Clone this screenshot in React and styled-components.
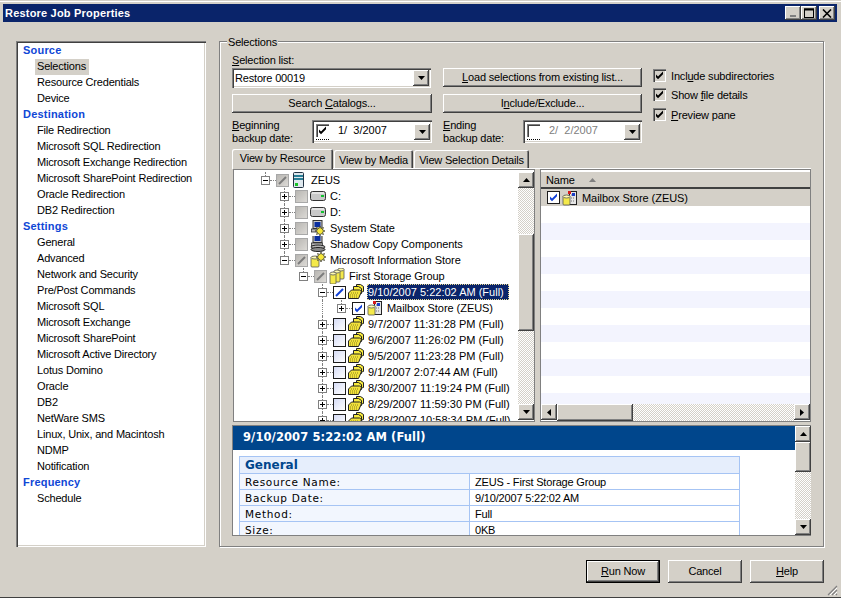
import React from "react";
import styled, { createGlobalStyle } from "styled-components";

const FACE = "#d4d0c8";
const UI_FONT = `"Liberation Sans", Arial, sans-serif`;
const WIDE_FONT = `"DejaVu Sans", Verdana, sans-serif`;

const GlobalStyle = createGlobalStyle`
  html, body {
    margin: 0;
    background: #fff;
  }
  body {
    font-family: ${UI_FONT};
    font-size: 11px;
    letter-spacing: -0.18px;
    color: #000;
  }
  * {
    box-sizing: border-box;
  }
`;

const Window = styled.div`
  position: relative;
  width: 841px;
  height: 598px;
  padding: 4px 4px 0 3px;
  background: ${FACE};
  border-bottom: 1px solid #404040;
  box-shadow: inset 0 1px 0 ${FACE}, inset 0 2px 0 #fff;
`;

const TitleBar = styled.div`
  display: flex;
  align-items: center;
  justify-content: space-between;
  height: 18px;
  padding: 0 2px;
  background: #0a246a;
  color: #fff;
  font-weight: bold;
  font-size: 11px;
  letter-spacing: 0.2px;
`;

const TitleButtons = styled.div`
  display: flex;
`;

const TitleButton = styled.div`
  width: 16px;
  height: 14px;
  margin-left: ${(p) => (p.$gap ? "2px" : "0")};
  display: flex;
  align-items: center;
  justify-content: center;
  background: ${FACE};
  box-shadow: inset -1px -1px #404040, inset 1px 1px #fff, inset -2px -2px #808080;
`;

const Body = styled.div`
  display: flex;
  gap: 13px;
  height: 506px;
  margin-top: 19px;
  padding-left: 13px;
`;

const Nav = styled.div`
  width: 190px;
  padding: 2px;
  background: #fff;
  box-shadow: inset 1px 1px #808080, inset 2px 2px #404040, inset -1px -1px #fff, inset -2px -2px ${FACE};
`;

const NavHead = styled.div`
  height: 16px;
  line-height: 15px;
  padding-left: 5px;
  color: #0f47d6;
  font-weight: bold;
  letter-spacing: 0.2px;
`;

const NavItem = styled.div`
  width: fit-content;
  height: 16px;
  line-height: 15px;
  margin-left: 17px;
  padding: 0 3px 0 2px;
  background: ${(p) => (p.$active ? FACE : "transparent")};
`;

const Group = styled.div`
  position: relative;
  width: 605px;
  padding: 13px 12px 0 12px;
  border: 1px solid #808080;
  box-shadow: 1px 1px 0 #fff, inset 1px 1px 0 #fff;
`;

const Legend = styled.div`
  position: absolute;
  top: -6px;
  left: 7px;
  padding: 0 1px;
  line-height: 13px;
  background: ${FACE};
`;

const Controls = styled.div`
  display: grid;
  grid-template-columns: 200px 199px auto;
  grid-template-rows: 33px 20px 23px;
  column-gap: 11px;
  row-gap: 6px;
`;

const ListField = styled.div`
  display: flex;
  flex-direction: column;
  gap: 1px;
  margin-top: -1px;
  line-height: 13px;
`;

const Combo = styled.div`
  display: flex;
  align-items: center;
  justify-content: space-between;
  height: 21px;
  width: 199px;
  padding: 2px 2px 2px 3px;
  background: #fff;
  box-shadow: inset 1px 1px #808080, inset 2px 2px #404040, inset -1px -1px #fff, inset -2px -2px ${FACE};
`;

const Button = styled.div`
  display: flex;
  align-items: center;
  justify-content: center;
  height: ${(p) => p.$h || 19}px;
  width: ${(p) => (p.$w ? `${p.$w}px` : "100%")};
  margin-top: ${(p) => p.$top || 0}px;
  padding-bottom: 1px;
  background: ${FACE};
  box-shadow: inset -1px -1px #404040, inset 1px 1px #fff, inset -2px -2px #808080;
`;

const DefaultButton = styled(Button)`
  border: 1px solid #000;
`;

const DateField = styled.div`
  display: flex;
  justify-content: space-between;
  line-height: 13px;
`;

const DateLabel = styled.span`
  margin-top: -1px;
`;

const DateBox = styled.div`
  display: flex;
  align-items: center;
  width: ${(p) => p.$w}px;
  height: 23px;
  padding: 2px 2px 2px 4px;
  color: ${(p) => (p.$off ? "#808080" : "#000")};
  background: #fff;
  box-shadow: inset 1px 1px #808080, inset 2px 2px #404040, inset -1px -1px #fff, inset -2px -2px ${FACE};
`;

const DateCheck = styled.span`
  width: 13px;
  height: 16px;
  flex: none;
  border-bottom: 1px dotted #000;
`;

const DateValue = styled.span`
  flex: 1;
  margin: 0 0 2px 9px;
  white-space: pre;
  letter-spacing: 0;
`;

const Options = styled.div`
  grid-column: 3;
  grid-row: 1 / span 3;
  display: flex;
  flex-direction: column;
  padding-top: 14px;
`;

const Option = styled.div`
  display: flex;
  align-items: center;
  height: 13px;
  margin-bottom: ${(p) => p.$after}px;
  gap: 5px;
`;

const ClassicBox = styled.span`
  display: block;
  width: 13px;
  height: 13px;
  flex: none;
  box-shadow: inset 1px 1px #808080, inset 2px 2px #404040, inset -1px -1px #fff;
  background: ${(p) => (p.$shade ? FACE : "#fff")};
`;

const Tabs = styled.div`
  display: flex;
  align-items: flex-end;
  height: 20px;
  margin-top: 6px;
  border-bottom: 1px solid #fff;
`;

const Tab = styled.div`
  height: ${(p) => (p.$active ? 20 : 18)}px;
  width: ${(p) => p.$w}px;
  margin-right: 1px;
  margin-bottom: ${(p) => (p.$active ? -1 : 0)}px;
  line-height: ${(p) => (p.$active ? 18 : 20)}px;
  background: ${FACE};
  border-radius: 2px 2px 0 0;
  box-shadow: inset 1px 1px #fff, inset -1px 0 #404040, inset -2px 0 #808080;
  text-align: center;
`;

const Split = styled.div`
  display: flex;
  gap: 5px;
  height: 253px;
  padding-left: 1px;
`;

const TreePanel = styled.div`
  display: flex;
  width: 302px;
  background: #fff;
  border: 1px solid #808080;
`;

const TreeRows = styled.div`
  flex: 1;
  padding-top: 2px;
  overflow: hidden;
`;

const TreeRow = styled.div`
  position: relative;
  display: flex;
  align-items: center;
  height: 16px;
  padding-left: ${(p) => 27 + p.$level * 19}px;
  white-space: nowrap;

  &::before {
    content: "";
    display: ${(p) => (p.$through ? "block" : "none")};
    position: absolute;
    left: ${(p) => 31 + (p.$level - 1) * 19}px;
    top: 0;
    bottom: 0;
    border-left: 1px dotted #808080;
  }
`;

const Expander = styled.span`
  position: relative;
  width: 15px;
  height: 16px;
  flex: none;

  &::before {
    content: "";
    position: absolute;
    left: 4px;
    top: 0;
    bottom: ${(p) => (p.$last ? "8px" : "0")};
    border-left: 1px dotted #808080;
  }

  &::after {
    content: "";
    position: absolute;
    left: 9px;
    right: 0;
    top: 8px;
    border-top: 1px dotted #808080;
  }
`;

const ExpanderBox = styled.svg`
  position: absolute;
  z-index: 1;
  left: 0;
  top: 4px;
  display: block;
`;

const TriBox = styled.span`
  display: block;
  width: 13px;
  height: 13px;
  flex: none;
  border: 1px solid ${(p) => (p.$gray ? "#a8a8a8" : "#1c1c1c")};
  background: ${(p) =>
    p.$gray ? "linear-gradient(135deg, #b8b6b2, #dcdad6)" : p.$tint ? "linear-gradient(135deg, #d6dcf6, #fff)" : "#fff"};
`;

const IconSlot = styled.span`
  display: flex;
  justify-content: center;
  width: 16px;
  height: 16px;
  margin-left: 2px;
  flex: none;
`;

const NodeLabel = styled.span`
  height: 16px;
  line-height: 17px;
  margin-left: ${(p) => (p.$selected ? 3 : 4)}px;
  padding: 0 ${(p) => (p.$selected ? "5px" : "0")} 0 ${(p) => (p.$selected ? "1px" : "0")};
  letter-spacing: ${(p) => (p.$dated ? "0" : "-0.05px")};
  color: ${(p) => (p.$selected ? "#fff" : "#000")};
  background: ${(p) => (p.$selected ? "#0a246a" : "transparent")};
  outline: ${(p) => (p.$selected ? "1px dotted #e8d890" : "none")};
  outline-offset: -1px;
`;

const VScroll = styled.div`
  display: flex;
  flex-direction: column;
  width: 16px;
  flex: none;
  padding: ${(p) => p.$pad || 0}px 0 ${(p) => (p.$pad ? 1 : 0)}px;
`;

const HScroll = styled.div`
  display: flex;
  height: 17px;
  flex: none;
  margin-top: auto;
`;

const ScrollButton = styled.div`
  display: flex;
  align-items: center;
  justify-content: center;
  width: 16px;
  height: 16px;
  flex: none;
  background: ${FACE};
  box-shadow: inset -1px -1px #404040, inset 1px 1px #fff, inset -2px -2px #808080;
`;

const Track = styled.div`
  flex: ${(p) => (p.$fixed ? "none" : 1)};
  height: ${(p) => (p.$fixed ? `${p.$fixed}px` : "auto")};
  background: repeating-conic-gradient(#fff 0 25%, ${FACE} 0 50%) 0 0 / 2px 2px;
`;

const Thumb = styled.div`
  flex: none;
  width: ${(p) => (p.$w ? `${p.$w}px` : "100%")};
  height: ${(p) => (p.$h ? `${p.$h}px` : "100%")};
  background: ${FACE};
  box-shadow: inset -1px -1px #404040, inset 1px 1px #fff, inset -2px -2px #808080;
`;

const ListPanel = styled.div`
  display: flex;
  flex-direction: column;
  width: 271px;
  background: #fff;
  border: 1px solid #808080;
  padding-top: 2px;
`;

const ListHead = styled.div`
  display: flex;
  align-items: center;
  gap: 14px;
  height: 17px;
  flex: none;
  padding-left: 5px;
  background: ${FACE};
  border-bottom: 2px solid #404040;
`;

const ListRows = styled.div`
  flex: 1;
  overflow: hidden;
`;

const ListRow = styled.div`
  display: flex;
  align-items: center;
  height: 17px;
  padding-left: 6px;
  background: ${(p) => (p.$active ? FACE : p.$stripe ? "#f3f4fe" : "#fff")};
`;

const Preview = styled.div`
  display: flex;
  height: 111px;
  margin-top: 3px;
  background: #fff;
  border: 1px solid #808080;
  border-right: 0;
  overflow: hidden;
`;

const PreviewPage = styled.div`
  flex: 1;
  overflow: hidden;
`;

const PreviewBanner = styled.div`
  height: 24px;
  line-height: 23px;
  padding-left: 10px;
  background: #00468c;
  color: #fff;
  font-family: ${WIDE_FONT};
  font-size: 11.5px;
  font-weight: bold;
  letter-spacing: 0.1px;
`;

const InfoTable = styled.table`
  width: 501px;
  margin: 6px 0 0 6px;
  border-collapse: collapse;
  table-layout: fixed;
  font-size: 11px;

  td, th {
    height: 16px;
    padding: 0 0 0 5px;
    border: 1px solid #a6c4f4;
    line-height: 14px;
    text-align: left;
    white-space: nowrap;
  }
`;

const KeyColumn = styled.col`
  width: 230px;
`;

const InfoTitle = styled.th`
  background: #e6eefc;
  color: #00468c;
  font-family: ${WIDE_FONT};
  font-size: 12px;
  font-weight: bold;
  letter-spacing: 0;
  && {
    height: 17px;
  }
`;

const InfoKey = styled.td`
  background: #f2f6fe;
  font-family: ${WIDE_FONT};
  font-size: 10.5px;
  letter-spacing: 0.7px;
`;

const InfoValue = styled.td`
  background: #fff;
`;

const Footer = styled.div`
  display: flex;
  justify-content: flex-end;
  gap: 8px;
  margin-top: 13px;
  padding-right: 13px;
`;

const Grip = styled.svg`
  position: absolute;
  right: 3px;
  bottom: 1px;
`;

const Arrow = ({ dir = "down", color = "#000" }) => {
  const points = {
    down: "0,0 7,0 3.5,4",
    up: "0,4 7,4 3.5,0",
    left: "4,0 4,7 0,3.5",
    right: "0,0 0,7 4,3.5",
  }[dir];
  const wide = dir === "up" || dir === "down";
  return (
    <svg width={wide ? 7 : 4} height={wide ? 4 : 7} viewBox={wide ? "0 0 7 4" : "0 0 4 7"}>
      <polygon points={points} fill={color} />
    </svg>
  );
};

const Tick = ({ color = "#000" }) => (
  <svg width="13" height="13" viewBox="0 0 13 13" style={{ display: "block" }}>
    <path d="M3 5.5l2 2 5-5v2.8l-5 5-2-2z" fill={color} />
  </svg>
);

const CheckBox = ({ kind }) => {
  if (kind === "gray" || kind === "graySlash") {
    return (
      <TriBox $gray>
        {kind === "graySlash" && (
          <svg width="11" height="11" viewBox="0 0 11 11" style={{ display: "block" }}>
            <path d="M2 9L9 2" stroke="#7c7c7c" strokeWidth="2" />
          </svg>
        )}
      </TriBox>
    );
  }
  if (kind === "slash") {
    return (
      <TriBox>
        <svg width="11" height="11" viewBox="0 0 11 11" style={{ display: "block" }}>
          <path d="M2 9L9 2" stroke="#0f3fd8" strokeWidth="2" />
        </svg>
      </TriBox>
    );
  }
  if (kind === "check") {
    return (
      <TriBox>
        <svg width="11" height="11" viewBox="0 0 11 11" style={{ display: "block" }}>
          <path d="M2 4.5l2 2 5-5v2.8l-5 5-2-2z" fill="#0f3fd8" />
        </svg>
      </TriBox>
    );
  }
  return <TriBox $tint />;
};

const Toggle = ({ open, last }) => (
  <Expander $last={last}>
    <ExpanderBox width="9" height="9" viewBox="0 0 9 9">
      <rect x="0.5" y="0.5" width="8" height="8" fill="#fff" stroke="#808080" />
      <path d={open ? "M2 4.5h5" : "M2 4.5h5M4.5 2v5"} stroke="#000" />
    </ExpanderBox>
  </Expander>
);

const Cylinder = ({ x, y, w = 7, h = 10 }) => (
  <g>
    <rect x={x} y={y + 1} width={w} height={h} rx="1" fill="#f4e94a" stroke="#555" strokeWidth="0.8" />
    <ellipse cx={x + w / 2} cy={y + 1.5} rx={w / 2} ry="1.5" fill="#fffbb0" stroke="#555" strokeWidth="0.8" />
  </g>
);

const Spark = ({ x, y }) => (
  <path
    d={`M${x + 4} ${y}l1 2.5 2.5-1-1 2.5 2.5 1-2.5 1 1 2.5-2.5-1-1 2.5-1-2.5-2.5 1 1-2.5-2.5-1 2.5-1-1-2.5 2.5 1z`}
    fill="#f7e838"
    stroke="#333"
    strokeWidth="0.7"
  />
);

const Monitor = ({ y = 0 }) => (
  <g>
    <rect x="3" y={y + 0.5} width="9" height="8" fill="#c8c8c8" stroke="#333" />
    <rect x="4.5" y={y + 2} width="6" height="5" fill="#0a2ea0" />
    <rect x="1.5" y={y + 9} width="11" height="3" fill="#bbb" stroke="#333" strokeWidth="0.8" />
  </g>
);

const ICONS = {
  server: (
    <>
      <rect x="2.5" y="0.5" width="10" height="15" rx="1" fill="#dfe8ee" stroke="#234" />
      <path d="M3 4h9M3 7h9" stroke="#2a7f96" strokeWidth="2" />
      <rect x="4" y="11" width="3" height="3" fill="#19c22a" />
    </>
  ),
  disk: (
    <>
      <rect x="0.5" y="3.5" width="15" height="9" rx="2" fill="#c9c9c9" stroke="#333" />
      <path d="M2 5h12" stroke="#fff" />
      <rect x="11" y="7" width="3" height="2" fill="#12c030" />
    </>
  ),
  system: (
    <>
      <Monitor />
      <Spark x={6} y={6} />
    </>
  ),
  shadow: (
    <>
      <Monitor y={-2} />
      <ellipse cx="8" cy="11" rx="7" ry="2" fill="#b5b5b5" stroke="#222" />
      <ellipse cx="8" cy="13.5" rx="7" ry="2" fill="#8a8a8a" stroke="#222" />
    </>
  ),
  store: (
    <>
      <Cylinder x={1} y={4} w={8} h={10} />
      <Spark x={7} y={0} />
    </>
  ),
  group: (
    <>
      <Cylinder x={9} y={0} w={6} h={10} />
      <Cylinder x={5} y={2} w={6} h={11} />
      <Cylinder x={1} y={4} w={6} h={11} />
    </>
  ),
  folders: (
    <>
      <path d="M8.5 0.5h4l3 2v5l-7 2z" fill="#f7ea3c" stroke="#222" />
      <path d="M5.5 2.5h5l3 2v5l-8 2z" fill="#f7ea3c" stroke="#222" />
      <path d="M0.5 9l3-3h8l2 1.5-3 7h-10z" fill="#f2e23a" stroke="#222" />
      <path d="M3 9h7M2 11h7M2 13h7" stroke="#8a8020" strokeDasharray="1 1" />
    </>
  ),
  mailbox: (
    <>
      <rect x="7.5" y="1.5" width="7" height="13" fill="#e6e6e6" stroke="#222" />
      <path d="M9 5h4M9 8h4M9 11h4" stroke="#777" strokeDasharray="1 1" />
      <rect x="6" y="1" width="3" height="3" fill="#d81818" />
      <rect x="10" y="3" width="3" height="3" fill="#1c3cc8" />
      <Cylinder x={1} y={5} w={7} h={9} />
    </>
  ),
};

const NodeIcon = ({ name }) => (
  <IconSlot>
    <svg width="16" height="16" viewBox="0 0 16 16">
      {ICONS[name]}
    </svg>
  </IconSlot>
);

const NAV = [
  ["Source", ["Selections", "Resource Credentials", "Device"]],
  [
    "Destination",
    [
      "File Redirection",
      "Microsoft SQL Redirection",
      "Microsoft Exchange Redirection",
      "Microsoft SharePoint Redirection",
      "Oracle Redirection",
      "DB2 Redirection",
    ],
  ],
  [
    "Settings",
    [
      "General",
      "Advanced",
      "Network and Security",
      "Pre/Post Commands",
      "Microsoft SQL",
      "Microsoft Exchange",
      "Microsoft SharePoint",
      "Microsoft Active Directory",
      "Lotus Domino",
      "Oracle",
      "DB2",
      "NetWare SMS",
      "Linux, Unix, and Macintosh",
      "NDMP",
      "Notification",
    ],
  ],
  ["Frequency", ["Schedule"]],
];

const TREE = [
  { level: 0, open: true, last: true, check: "graySlash", icon: "server", label: "ZEUS" },
  { level: 1, check: "gray", icon: "disk", label: "C:" },
  { level: 1, check: "gray", icon: "disk", label: "D:" },
  { level: 1, check: "gray", icon: "system", label: "System State" },
  { level: 1, check: "gray", icon: "shadow", label: "Shadow Copy Components" },
  { level: 1, open: true, last: true, check: "graySlash", icon: "store", label: "Microsoft Information Store" },
  { level: 2, open: true, last: true, check: "graySlash", icon: "group", label: "First Storage Group" },
  { level: 3, open: true, check: "slash", icon: "folders", label: "9/10/2007 5:22:02 AM (Full)", selected: true },
  { level: 4, last: true, through: true, check: "check", icon: "mailbox", label: "Mailbox Store (ZEUS)" },
  { level: 3, icon: "folders", label: "9/7/2007 11:31:28 PM (Full)" },
  { level: 3, icon: "folders", label: "9/6/2007 11:26:02 PM (Full)" },
  { level: 3, icon: "folders", label: "9/5/2007 11:23:28 PM (Full)" },
  { level: 3, icon: "folders", label: "9/1/2007 2:07:44 AM (Full)" },
  { level: 3, icon: "folders", label: "8/30/2007 11:19:24 PM (Full)" },
  { level: 3, icon: "folders", label: "8/29/2007 11:59:30 PM (Full)" },
  { level: 3, icon: "folders", label: "8/28/2007 10:58:34 PM (Full)" },
];

const INFO = [
  ["Resource Name:", "ZEUS - First Storage Group"],
  ["Backup Date:", "9/10/2007 5:22:02 AM"],
  ["Method:", "Full"],
  ["Size:", "0KB"],
];

export default function App() {
  return (
    <Window>
      <GlobalStyle />
      <TitleBar>
        <span>Restore Job Properties</span>
        <TitleButtons>
          <TitleButton>
            <svg width="8" height="8" viewBox="0 0 8 8">
              <path d="M1 7h6" stroke="#808080" strokeWidth="2" />
            </svg>
          </TitleButton>
          <TitleButton>
            <svg width="10" height="10" viewBox="0 0 10 10">
              <rect x="0.5" y="1" width="9" height="8.5" fill="none" stroke="#000" />
              <path d="M0 1.5h10" stroke="#000" strokeWidth="2" />
            </svg>
          </TitleButton>
          <TitleButton $gap>
            <svg width="10" height="9" viewBox="0 0 10 9">
              <path d="M1 0.5l8 8M9 0.5l-8 8" stroke="#000" strokeWidth="1.6" />
            </svg>
          </TitleButton>
        </TitleButtons>
      </TitleBar>

      <Body>
        <Nav>
          {NAV.map(([head, items]) => (
            <React.Fragment key={head}>
              <NavHead>{head}</NavHead>
              {items.map((item) => (
                <NavItem key={item} $active={item === "Selections"}>
                  {item}
                </NavItem>
              ))}
            </React.Fragment>
          ))}
        </Nav>

        <Group>
          <Legend>Selections</Legend>
          <Controls>
            <ListField>
              <span>
                <u>S</u>election list:
              </span>
              <Combo>
                Restore 00019
                <ScrollButton>
                  <Arrow />
                </ScrollButton>
              </Combo>
            </ListField>
            <Button $top={13}>
              <span>
                <u>L</u>oad selections from existing list...
              </span>
            </Button>
            <Options>
              <Option $after={6}>
                <ClassicBox $shade>
                  <Tick />
                </ClassicBox>
                <span>
                  Incl<u>u</u>de subdirectories
                </span>
              </Option>
              <Option $after={7}>
                <ClassicBox $shade>
                  <Tick />
                </ClassicBox>
                <span>
                  Show <u>f</u>ile details
                </span>
              </Option>
              <Option $after={0}>
                <ClassicBox $shade>
                  <Tick />
                </ClassicBox>
                <span>
                  <u>P</u>review pane
                </span>
              </Option>
            </Options>
            <Button>
              <span>
                Search <u>C</u>atalogs...
              </span>
            </Button>
            <Button>
              <span>
                I<u>n</u>clude/Exclude...
              </span>
            </Button>
            <DateField>
              <DateLabel>
                <u>B</u>eginning
                <br />
                backup date:
              </DateLabel>
              <DateBox $w={120}>
                <DateCheck>
                  <ClassicBox>
                    <Tick />
                  </ClassicBox>
                </DateCheck>
                <DateValue>1/  3/2007</DateValue>
                <ScrollButton>
                  <Arrow />
                </ScrollButton>
              </DateBox>
            </DateField>
            <DateField>
              <DateLabel>
                <u>E</u>nding
                <br />
                backup date:
              </DateLabel>
              <DateBox $w={119} $off>
                <DateCheck>
                  <ClassicBox />
                </DateCheck>
                <DateValue>2/  2/2007</DateValue>
                <ScrollButton>
                  <Arrow />
                </ScrollButton>
              </DateBox>
            </DateField>
          </Controls>

          <Tabs>
            <Tab $active $w={101}>View by Resource</Tab>
            <Tab $w={79}>View by Media</Tab>
            <Tab $w={115}>View Selection Details</Tab>
          </Tabs>

          <Split>
            <TreePanel>
              <TreeRows>
                {TREE.map((node) => (
                  <TreeRow key={node.label} $level={node.level} $through={node.through}>
                    <Toggle open={node.open} last={node.last} />
                    <CheckBox kind={node.check} />
                    <NodeIcon name={node.icon} />
                    <NodeLabel $selected={node.selected} $dated={node.icon === "folders"}>
                      {node.label}
                    </NodeLabel>
                  </TreeRow>
                ))}
              </TreeRows>
              <VScroll $pad={2}>
                <ScrollButton>
                  <Arrow dir="up" />
                </ScrollButton>
                <Track $fixed={46} />
                <Thumb $h={97} />
                <Track />
                <ScrollButton>
                  <Arrow />
                </ScrollButton>
              </VScroll>
            </TreePanel>

            <ListPanel>
              <ListHead>
                Name
                <Arrow dir="up" color="#808080" />
              </ListHead>
              <ListRows>
                <ListRow $active>
                  <CheckBox kind="check" />
                  <NodeIcon name="mailbox" />
                  <NodeLabel>Mailbox Store (ZEUS)</NodeLabel>
                </ListRow>
                {Array.from({ length: 12 }, (_, i) => (
                  <ListRow key={i} $stripe={i % 2 === 1} />
                ))}
              </ListRows>
              <HScroll>
                <ScrollButton>
                  <Arrow dir="left" />
                </ScrollButton>
                <Thumb $w={76} />
                <Track />
                <ScrollButton>
                  <Arrow dir="right" />
                </ScrollButton>
              </HScroll>
            </ListPanel>
          </Split>

          <Preview>
            <PreviewPage>
              <PreviewBanner>9/10/2007 5:22:02 AM (Full)</PreviewBanner>
              <InfoTable>
                <colgroup>
                  <KeyColumn />
                  <col />
                </colgroup>
                <thead>
                  <tr>
                    <InfoTitle colSpan={2}>General</InfoTitle>
                  </tr>
                </thead>
                <tbody>
                  {INFO.map(([key, value]) => (
                    <tr key={key}>
                      <InfoKey>{key}</InfoKey>
                      <InfoValue>{value}</InfoValue>
                    </tr>
                  ))}
                </tbody>
              </InfoTable>
            </PreviewPage>
            <VScroll>
              <ScrollButton>
                <Arrow dir="up" />
              </ScrollButton>
              <Thumb $h={30} />
              <Track />
              <ScrollButton>
                <Arrow />
              </ScrollButton>
            </VScroll>
          </Preview>
        </Group>
      </Body>

      <Footer>
        <DefaultButton $w={74} $h={23}>
          <span>
            <u>R</u>un Now
          </span>
        </DefaultButton>
        <Button $w={74} $h={23}>
          Cancel
        </Button>
        <Button $w={74} $h={23}>
          <span>
            <u>H</u>elp
          </span>
        </Button>
      </Footer>

      <Grip width="12" height="12" viewBox="0 0 12 12">
        <path d="M11 2L2 11M11 6l-5 5M11 10l-1 1" stroke="#808080" strokeWidth="1.2" />
        <path d="M11 4l-7 7M11 8l-3 3" stroke="#fff" />
      </Grip>
    </Window>
  );
}
